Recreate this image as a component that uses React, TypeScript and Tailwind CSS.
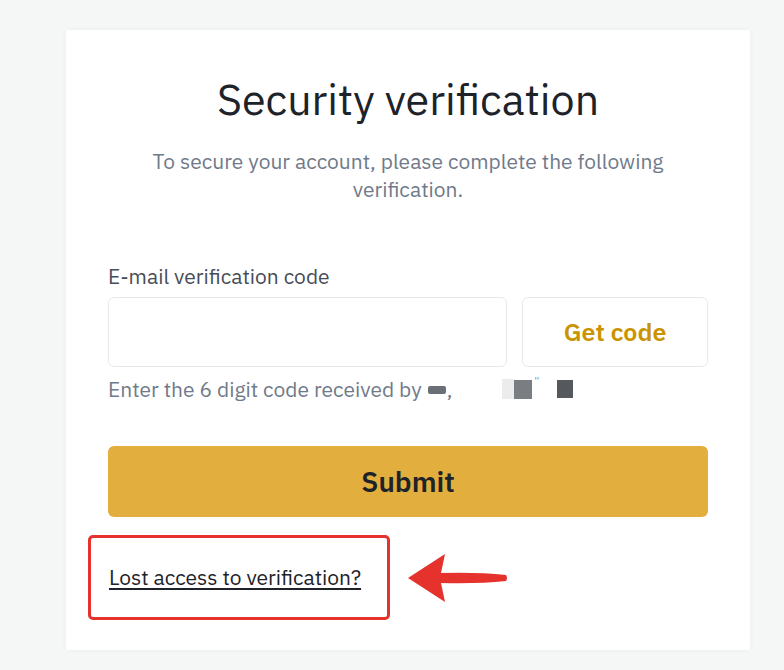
import { useState } from "react";

const font = { fontFamily: '"IBM Plex Sans", Roboto, "Noto Sans", sans-serif' };

function ArrowLeft() {
  return (
    <svg width="100" height="52" viewBox="0 0 100 52" className="absolute left-[317px] top-1/2 -translate-y-1/2">
      <path d="M0 26 L37 2 L33 21 Q70 20 98 23 Q100 26 98 29 Q70 32 33 31 L37 50 Z" fill="#e5322d" />
    </svg>
  );
}

export default function App() {
  const [code, setCode] = useState("");

  return (
    <div className="min-h-screen w-full bg-[#f5f6f6] pt-[30px]" style={font}>
      <div className="ml-[66px] w-[684px] h-[620px] bg-white shadow-[0_0_6px_rgba(0,0,0,0.04)] px-[42px] pt-[45px]">
        <h1 className="text-center text-[43px] leading-[48px] text-[#1e2329]">Security verification</h1>
        <p className="mx-auto mt-[24px] w-[540px] text-center text-[21px] leading-[28px] text-[#707a8a]">
          To secure your account, please complete the following verification.
        </p>

        <label className="mt-[61px] block text-[21px] leading-[24px] text-[#474d57]">E-mail verification code</label>
        <div className="mt-[9px] flex gap-[15px]">
          <input
            value={code}
            onChange={(e) => setCode(e.target.value)}
            className="h-[70px] w-[399px] rounded-[6px] border border-[#e6e8ea] px-4 text-xl outline-none"
          />
          <button className="h-[70px] flex-1 rounded-[6px] border border-[#e6e8ea] text-[25px] font-semibold text-[#c99400]">
            Get code
          </button>
        </div>
        <div className="mt-[9px] flex items-center text-[21px] leading-[26px] text-[#707a8a]">
          <span>Enter the 6 digit code received by</span>
          <span className="ml-[6px] mt-[2px] h-[8px] w-[18px] rounded-[2px] bg-[#6b6f76]" />
          <span className="ml-[1px]">,</span>
          <span className="ml-[50px] h-[20px] w-[12px] bg-[#ececec]" />
          <span className="h-[19px] w-[18px] bg-[#7a7d82]" />
          <span className="ml-[2px] -mt-[16px] text-[10px] leading-none">&#39;&#39;</span>
          <span className="ml-[18px] h-[18px] w-[16px] bg-[#55585d]" />
        </div>

        <button className="mt-[44px] h-[71px] w-full rounded-[6px] bg-[#e2ae3e] text-[28px] font-semibold text-[#1e2329]">
          Submit
        </button>

        <div className="relative mt-[18px] -ml-[20px] flex h-[85px] w-[302px] items-center rounded-[5px] border-[3px] border-[#e5322d] pl-[18px]">
          <a href="#" className="text-[21px] text-[#1e2329] underline underline-offset-[3px]">
            Lost access to verification?
          </a>
          <ArrowLeft />
        </div>
      </div>
    </div>
  );
}
